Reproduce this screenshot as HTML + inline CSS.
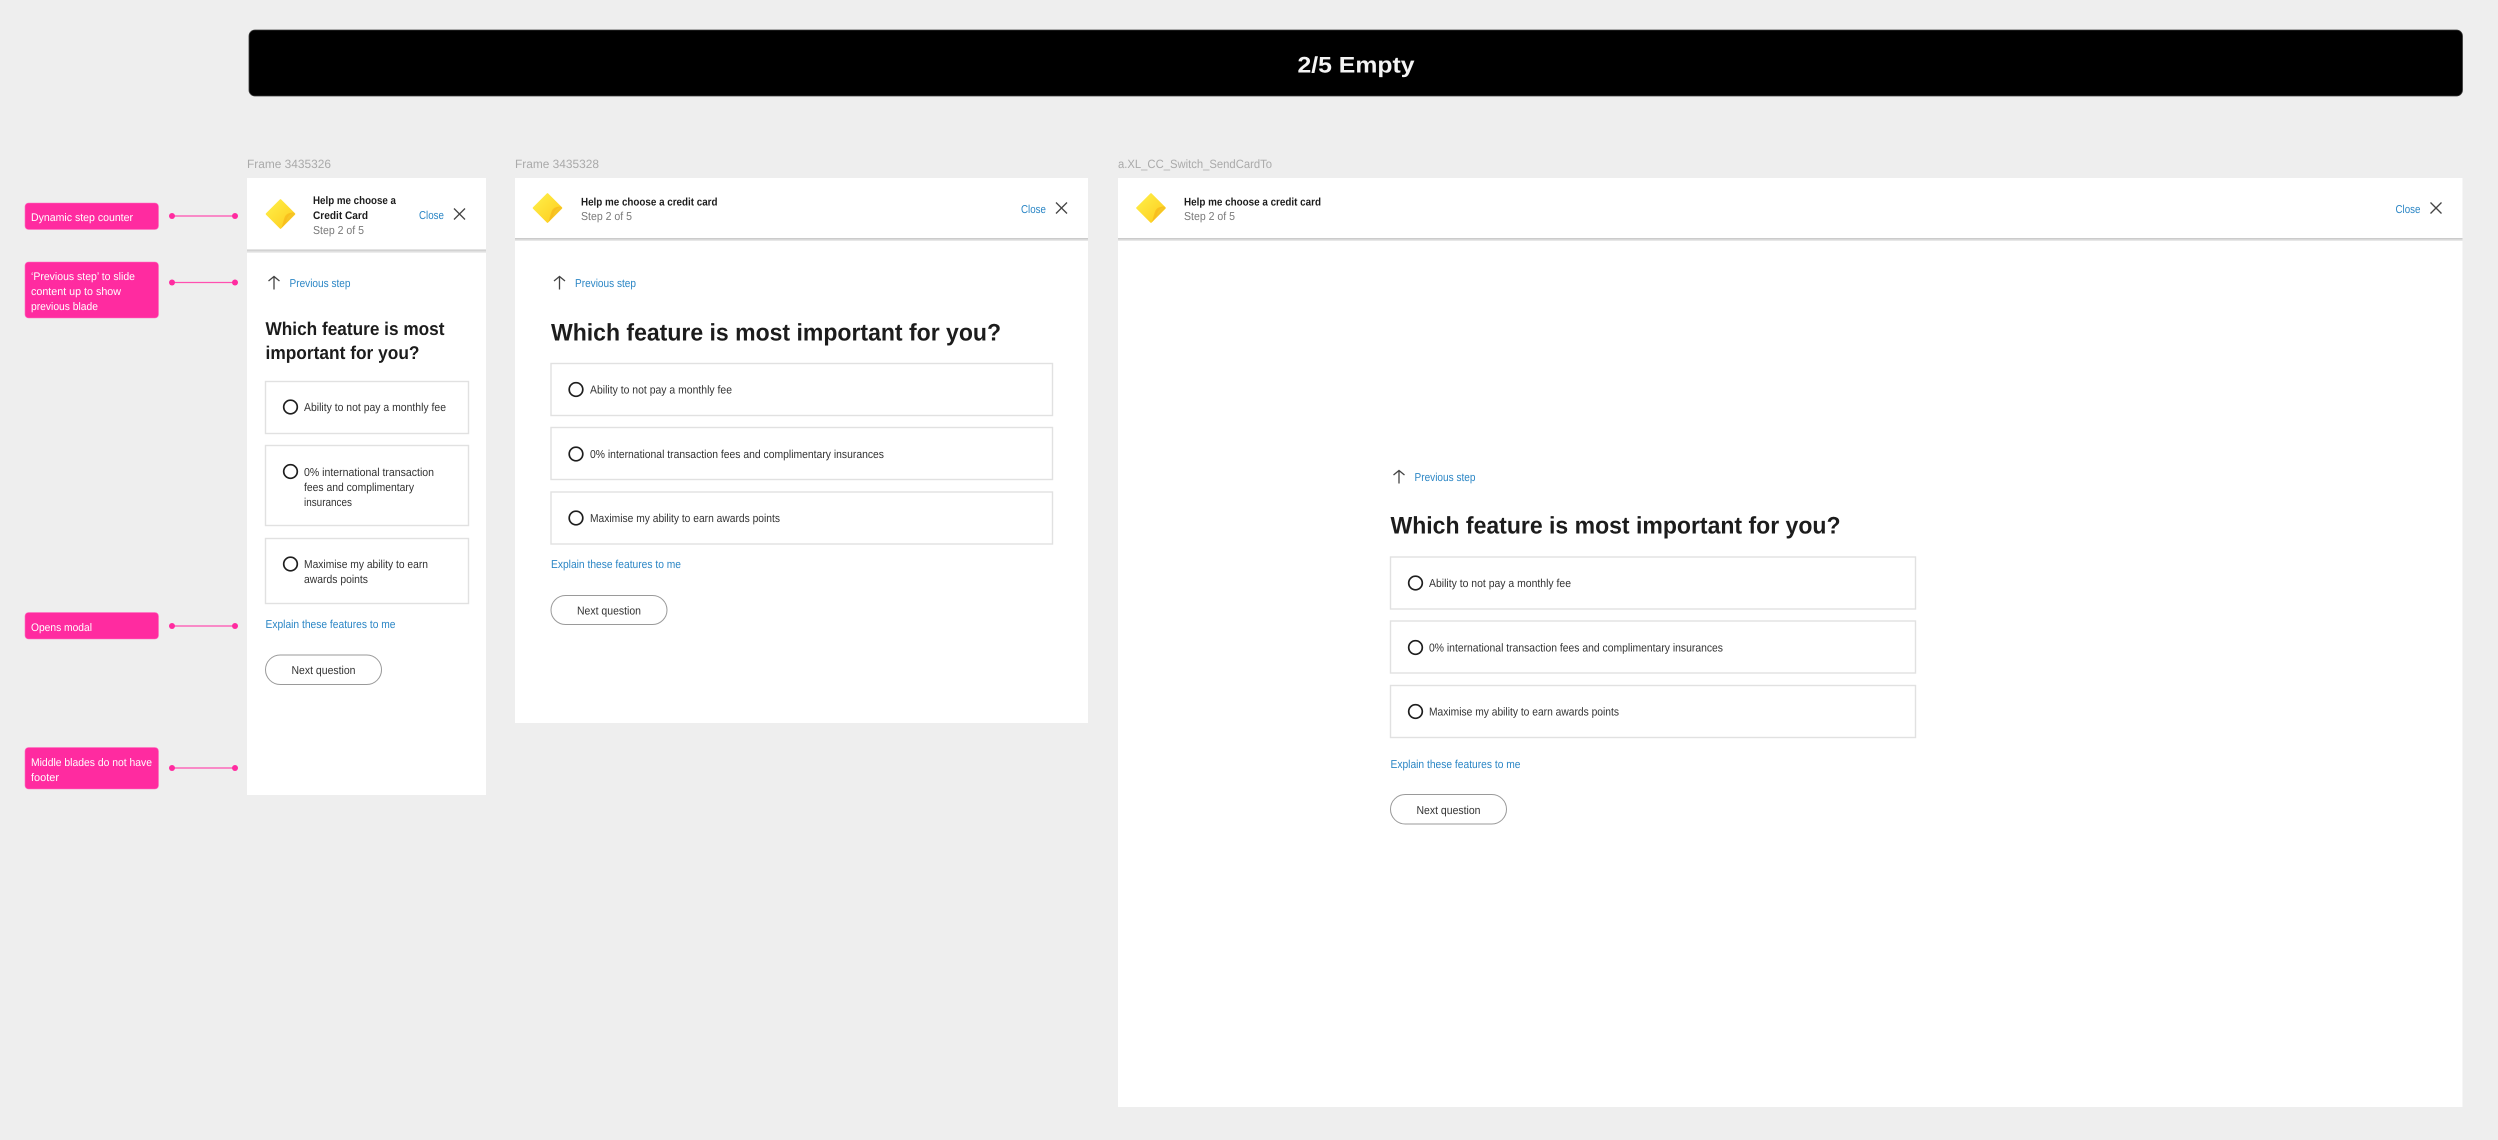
<!DOCTYPE html>
<html lang="en">
<head>
<meta charset="utf-8">
<title>2/5 Empty</title>
<style>
html,body{margin:0;padding:0;background:#eeeeee;width:2498px;height:1140px;overflow:hidden}
svg{display:block;filter:blur(.3px)}
text{font-family:"Liberation Sans",sans-serif;font-size:11.5px;fill:#333;text-rendering:geometricPrecision}
.l{fill:#aaaaaa;font-size:12px}
.a{fill:#2b86c5;font-size:11.5px}
.t{fill:#1c1c1c;font-weight:700;font-size:11px}
.s{fill:#7a7a7a;font-size:11.5px}
.h{fill:#1c1c1c;font-weight:700;font-size:24px}
.h1{fill:#1c1c1c;font-weight:700;font-size:18.5px}
.p{fill:#fff;font-size:11px}
.box{fill:#fff;stroke:#e1e1e1;stroke-width:1.4}
.btn{fill:#fff;stroke:#9a9a9a;stroke-width:1}
.r{fill:#fff;stroke:#1e1e1e;stroke-width:1.7}
.ic{fill:none;stroke:#444;stroke-width:1.3}
.pk{fill:#ff2ba0;stroke:#ff6fc0;stroke-width:.6}
.ln{stroke:#ff4fb0;stroke-width:1.2}
.dot{fill:#ff2ba0}
.hd{fill:#fff}
</style>
</head>
<body>
<svg width="2498" height="1140" viewBox="0 0 2498 1140" xmlns="http://www.w3.org/2000/svg">
<defs>
<linearGradient id="g" x1="0" y1="0" x2="1" y2="1">
<stop offset="0" stop-color="#fff04a"/><stop offset="1" stop-color="#fdcb1c"/>
</linearGradient>
<linearGradient id="f" x1="0" y1="0" x2="1" y2="1">
<stop offset="0" stop-color="#fbd835"/><stop offset="1" stop-color="#f1ae12"/>
</linearGradient>
<linearGradient id="sh" x1="0" y1="0" x2="0" y2="1">
<stop offset="0" stop-color="#c4c4c4"/><stop offset="1" stop-color="#eeeeee"/>
</linearGradient>
<g id="logo">
<path d="M0-14 14 0 0 14-14 0Z" fill="url(#g)" stroke="url(#g)" stroke-width="1.6" stroke-linejoin="round"/>
<path d="M13.500-1.500C9-1 6 1 5 4 4 7 3 10 1 14L14.500 0Z" fill="url(#f)"/>
<path d="M13.500-1.500C9 0 7 3 6 6 5 9 3 12 1 14 2.500 9 3 6 4.500 2.500 6-.5 9.500-1.500 13.500-1.500Z" fill="#f8bb1c" opacity=".8"/>
</g>
<g id="x"><path class="ic" d="M-5.500-5.500 5.500 5.500M5.500-5.500-5.500 5.500"/></g>
<g id="up"><path class="ic" d="M0 6.500V-6.500M-5.500-2 0-6.500 5.500-2"/></g>
</defs>

<!-- Banner -->
<rect x="249" y="30" width="2213.500" height="66" rx="6" fill="#000" stroke="#3a3a3a" stroke-width=".8"/>
<text x="1297.500" y="72.500" textLength="117" lengthAdjust="spacingAndGlyphs" style="font-size:22.500px;font-weight:700;fill:#f4f4f4">2/5 Empty</text>

<!-- Frame labels -->
<text class="l" x="247" y="168" textLength="84" lengthAdjust="spacingAndGlyphs">Frame 3435326</text>
<text class="l" x="515" y="168" textLength="84" lengthAdjust="spacingAndGlyphs">Frame 3435328</text>
<text class="l" x="1118" y="168" textLength="154" lengthAdjust="spacingAndGlyphs">a.XL_CC_Switch_SendCardTo</text>

<!-- Annotations -->
<rect class="pk" x="25" y="203" width="133.500" height="26.500" rx="3.500"/>
<text class="p" x="31" y="221" textLength="102" lengthAdjust="spacingAndGlyphs">Dynamic step counter</text>
<rect class="pk" x="25" y="262" width="133.500" height="56" rx="3.500"/>
<text class="p" x="31" y="280" textLength="104" lengthAdjust="spacingAndGlyphs">‘Previous step’ to slide</text>
<text class="p" x="31" y="295" textLength="90" lengthAdjust="spacingAndGlyphs">content up to show</text>
<text class="p" x="31" y="310" textLength="67" lengthAdjust="spacingAndGlyphs">previous blade</text>
<rect class="pk" x="25" y="612.500" width="133.500" height="26.500" rx="3.500"/>
<text class="p" x="31" y="631" textLength="61" lengthAdjust="spacingAndGlyphs">Opens modal</text>
<rect class="pk" x="25" y="747.500" width="133.500" height="41.500" rx="3.500"/>
<text class="p" x="31" y="766" textLength="121" lengthAdjust="spacingAndGlyphs">Middle blades do not have</text>
<text class="p" x="31" y="781" textLength="28" lengthAdjust="spacingAndGlyphs">footer</text>

<path class="ln" d="M172 216H235M172 282.500H235M172 626H235M172 768H235"/>
<g class="dot">
<circle cx="172" cy="216" r="3"/><circle cx="235" cy="216" r="3"/>
<circle cx="172" cy="282.500" r="3"/><circle cx="235" cy="282.500" r="3"/>
<circle cx="172" cy="626" r="3"/><circle cx="235" cy="626" r="3"/>
<circle cx="172" cy="768" r="3"/><circle cx="235" cy="768" r="3"/>
</g>

<!-- Frame 1 -->
<rect x="247" y="253" width="239" height="542" fill="#fff"/>
<rect x="247" y="249.500" width="239" height="3" fill="url(#sh)"/>
<rect class="hd" x="247" y="178" width="239" height="71.500"/>
<use href="#logo" transform="translate(280.500 214)"/>
<text class="t" x="313" y="204" textLength="83" lengthAdjust="spacingAndGlyphs">Help me choose a</text>
<text class="t" x="313" y="219" textLength="55" lengthAdjust="spacingAndGlyphs">Credit Card</text>
<text class="s" x="313" y="234" textLength="51" lengthAdjust="spacingAndGlyphs">Step 2 of 5</text>
<text class="a" x="419" y="219" textLength="25" lengthAdjust="spacingAndGlyphs">Close</text>
<use href="#x" transform="translate(459.500 214)"/>
<use href="#up" transform="translate(274 283)"/>
<text class="a" x="289.500" y="287" textLength="61" lengthAdjust="spacingAndGlyphs">Previous step</text>
<text class="h1" x="265.500" y="335" textLength="179" lengthAdjust="spacingAndGlyphs">Which feature is most</text>
<text class="h1" x="265.500" y="359" textLength="154" lengthAdjust="spacingAndGlyphs">important for you?</text>
<rect class="box" x="265.500" y="381.500" width="203" height="52"/>
<circle class="r" cx="290.500" cy="407" r="6.800"/>
<text x="304" y="411" textLength="142" lengthAdjust="spacingAndGlyphs">Ability to not pay a monthly fee</text>
<rect class="box" x="265.500" y="445.500" width="203" height="80"/>
<circle class="r" cx="290.500" cy="471.500" r="6.800"/>
<text x="304" y="476" textLength="130" lengthAdjust="spacingAndGlyphs">0% international transaction</text>
<text x="304" y="491" textLength="110" lengthAdjust="spacingAndGlyphs">fees and complimentary</text>
<text x="304" y="506" textLength="48" lengthAdjust="spacingAndGlyphs">insurances</text>
<rect class="box" x="265.500" y="538.500" width="203" height="65"/>
<circle class="r" cx="290.500" cy="564" r="6.800"/>
<text x="304" y="568" textLength="124" lengthAdjust="spacingAndGlyphs">Maximise my ability to earn</text>
<text x="304" y="583" textLength="64" lengthAdjust="spacingAndGlyphs">awards points</text>
<text class="a" x="265.500" y="628" textLength="130" lengthAdjust="spacingAndGlyphs">Explain these features to me</text>
<rect class="btn" x="265.500" y="655" width="116" height="29.500" rx="14.750"/>
<text x="291.500" y="674" textLength="64" lengthAdjust="spacingAndGlyphs">Next question</text>

<!-- Frame 2 -->
<rect x="515" y="241" width="573" height="482" fill="#fff"/>
<rect x="515" y="238" width="573" height="3" fill="url(#sh)"/>
<rect class="hd" x="515" y="178" width="573" height="60"/>
<use href="#logo" transform="translate(547.500 208)"/>
<text class="t" x="581" y="205.500" textLength="136.500" lengthAdjust="spacingAndGlyphs">Help me choose a credit card</text>
<text class="s" x="581" y="220" textLength="51" lengthAdjust="spacingAndGlyphs">Step 2 of 5</text>
<text class="a" x="1021" y="213" textLength="25" lengthAdjust="spacingAndGlyphs">Close</text>
<use href="#x" transform="translate(1061.500 208)"/>
<use href="#up" transform="translate(559.500 283)"/>
<text class="a" x="575" y="287" textLength="61" lengthAdjust="spacingAndGlyphs">Previous step</text>
<text class="h" x="551" y="340.500" textLength="450" lengthAdjust="spacingAndGlyphs">Which feature is most important for you?</text>
<rect class="box" x="551" y="363.500" width="501.500" height="52"/>
<circle class="r" cx="576" cy="389.500" r="6.800"/>
<text x="590" y="393.500" textLength="142" lengthAdjust="spacingAndGlyphs">Ability to not pay a monthly fee</text>
<rect class="box" x="551" y="427.500" width="501.500" height="52"/>
<circle class="r" cx="576" cy="454" r="6.800"/>
<text x="590" y="458" textLength="294" lengthAdjust="spacingAndGlyphs">0% international transaction fees and complimentary insurances</text>
<rect class="box" x="551" y="492" width="501.500" height="52"/>
<circle class="r" cx="576" cy="518" r="6.800"/>
<text x="590" y="522" textLength="190" lengthAdjust="spacingAndGlyphs">Maximise my ability to earn awards points</text>
<text class="a" x="551" y="568" textLength="130" lengthAdjust="spacingAndGlyphs">Explain these features to me</text>
<rect class="btn" x="551" y="595.500" width="116" height="29" rx="14.500"/>
<text x="577" y="614.500" textLength="64" lengthAdjust="spacingAndGlyphs">Next question</text>

<!-- Frame 3 -->
<rect x="1118" y="241" width="1344.500" height="866" fill="#fff"/>
<rect x="1118" y="238" width="1344.500" height="3" fill="url(#sh)"/>
<rect class="hd" x="1118" y="178" width="1344.500" height="60"/>
<use href="#logo" transform="translate(1151 208)"/>
<text class="t" x="1184" y="205.500" textLength="137" lengthAdjust="spacingAndGlyphs">Help me choose a credit card</text>
<text class="s" x="1184" y="220" textLength="51" lengthAdjust="spacingAndGlyphs">Step 2 of 5</text>
<text class="a" x="2395.500" y="213" textLength="25" lengthAdjust="spacingAndGlyphs">Close</text>
<use href="#x" transform="translate(2436 208)"/>
<use href="#up" transform="translate(1399 477)"/>
<text class="a" x="1414.500" y="481" textLength="61" lengthAdjust="spacingAndGlyphs">Previous step</text>
<text class="h" x="1390.500" y="533.500" textLength="450" lengthAdjust="spacingAndGlyphs">Which feature is most important for you?</text>
<rect class="box" x="1390.500" y="557" width="525" height="52"/>
<circle class="r" cx="1415.500" cy="583" r="6.800"/>
<text x="1429" y="587" textLength="142" lengthAdjust="spacingAndGlyphs">Ability to not pay a monthly fee</text>
<rect class="box" x="1390.500" y="621" width="525" height="52"/>
<circle class="r" cx="1415.500" cy="647.500" r="6.800"/>
<text x="1429" y="651.500" textLength="294" lengthAdjust="spacingAndGlyphs">0% international transaction fees and complimentary insurances</text>
<rect class="box" x="1390.500" y="685.500" width="525" height="52"/>
<circle class="r" cx="1415.500" cy="711.500" r="6.800"/>
<text x="1429" y="715.500" textLength="190" lengthAdjust="spacingAndGlyphs">Maximise my ability to earn awards points</text>
<text class="a" x="1390.500" y="768" textLength="130" lengthAdjust="spacingAndGlyphs">Explain these features to me</text>
<rect class="btn" x="1390.500" y="794.500" width="116" height="29.500" rx="14.750"/>
<text x="1416.500" y="814" textLength="64" lengthAdjust="spacingAndGlyphs">Next question</text>
</svg>
</body>
</html>
